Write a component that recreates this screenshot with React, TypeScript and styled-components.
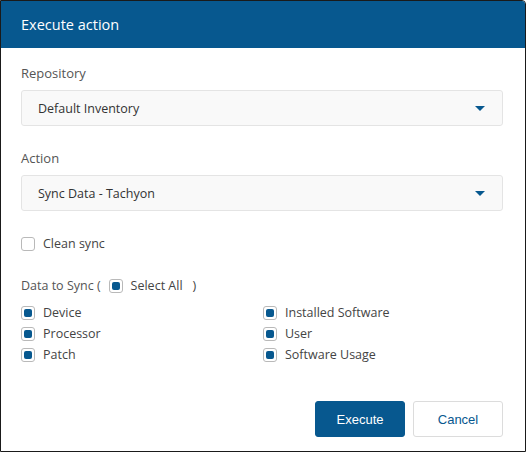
import { createGlobalStyle } from 'styled-components';
import styled from 'styled-components';

const GlobalStyle = createGlobalStyle`
  html, body {
    margin: 0;
    padding: 0;
    background: #ffffff;
  }
  * { box-sizing: border-box; }
`;

const Dialog = styled.div`
  width: 526px;
  height: 452px;
  border: 1px solid #1a1a1a;
  border-top-right-radius: 4px;
  background: #fff;
  font-family: "Open Sans", "Liberation Sans", sans-serif;
  display: flex;
  flex-direction: column;
  overflow: hidden;
`;

const Header = styled.div`
  height: 47px;
  background: #07588f;
  color: #fff;
  font-size: 14.5px;
  padding: 0 20px;
  display: flex;
  align-items: center;
`;

const Body = styled.div`
  flex: 1;
  padding: 16px 22px 0 20px;
  display: flex;
  flex-direction: column;
`;

const Label = styled.div`
  font-size: 13px;
  color: #555;
  line-height: 18px;
  margin-bottom: 8px;
`;

const Select = styled.div`
  height: 36px;
  background: #f9f9f9;
  border: 1px solid #e4e4e4;
  border-radius: 3px;
  padding: 0 17px 0 16px;
  display: flex;
  align-items: center;
  justify-content: space-between;
  font-size: 12.5px;
  color: #333;
  margin-bottom: 23px;
`;

const Caret = styled.span`
  width: 0;
  height: 0;
  border-left: 5px solid transparent;
  border-right: 5px solid transparent;
  border-top: 5px solid #07588f;
`;

const Box = styled.span<{ $checked?: boolean }>`
  width: 14px;
  height: 14px;
  border: 1px solid #b9b9b9;
  border-radius: 3px;
  background: #fff;
  display: inline-flex;
  align-items: center;
  justify-content: center;
  flex-shrink: 0;
  &::after {
    content: '';
    display: ${(p) => (p.$checked ? 'block' : 'none')};
    width: 8px;
    height: 8px;
    border-radius: 2px;
    background: #07588f;
  }
`;

const Check = styled.label`
  display: flex;
  align-items: center;
  gap: 8px;
  font-size: 12.5px;
  color: #444;
  line-height: 21px;
`;

const CleanRow = styled.div`
  margin-top: -1px;
  margin-bottom: 21px;
`;

const SyncHead = styled.div`
  display: flex;
  align-items: center;
  font-size: 12.5px;
  color: #555;
  line-height: 20px;
  margin-bottom: 6px;
  gap: 8px;
`;

const Close = styled.span`
  margin-left: 2px;
`;

const Grid = styled.div`
  display: grid;
  grid-template-columns: 242px 1fr;
  grid-auto-flow: column;
  grid-template-rows: repeat(3, 21px);
`;

const Footer = styled.div`
  display: flex;
  justify-content: flex-end;
  gap: 8px;
  margin-top: auto;
  padding: 0 22px 14px 0;
`;

const Button = styled.button<{ $primary?: boolean }>`
  width: 90px;
  height: 36px;
  border-radius: 3px;
  font-family: "Liberation Sans", Arial, sans-serif;
  font-size: 13px;
  cursor: pointer;
  background: ${(p) => (p.$primary ? '#07588f' : '#fff')};
  color: ${(p) => (p.$primary ? '#fff' : '#07588f')};
  border: 1px solid ${(p) => (p.$primary ? '#07588f' : '#dcdcdc')};
`;

const items = [
  'Device',
  'Processor',
  'Patch',
  'Installed Software',
  'User',
  'Software Usage',
];

export default function App() {
  return (
    <>
      <GlobalStyle />
      <Dialog>
        <Header>Execute action</Header>
        <Body>
          <Label>Repository</Label>
          <Select>
            Default Inventory
            <Caret />
          </Select>
          <Label>Action</Label>
          <Select>
            Sync Data - Tachyon
            <Caret />
          </Select>
          <CleanRow>
            <Check>
              <Box />
              Clean sync
            </Check>
          </CleanRow>
          <SyncHead>
            Data to Sync (
            <Check>
              <Box $checked />
              Select All
              <Close>)</Close>
            </Check>
          </SyncHead>
          <Grid>
            {items.map((it) => (
              <Check key={it}>
                <Box $checked />
                {it}
              </Check>
            ))}
          </Grid>
        </Body>
        <Footer>
          <Button $primary>Execute</Button>
          <Button>Cancel</Button>
        </Footer>
      </Dialog>
    </>
  );
}
